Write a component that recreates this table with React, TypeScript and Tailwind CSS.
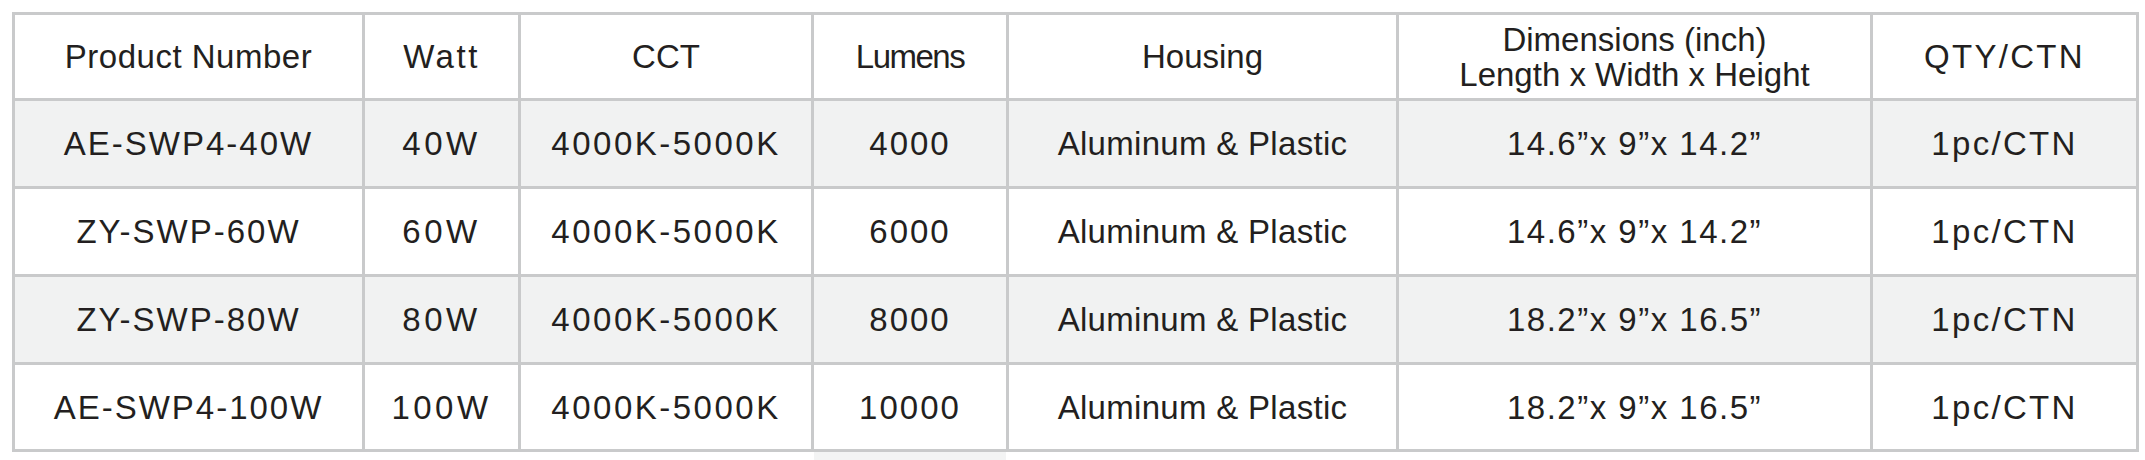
const headers = [
  "Product Number",
  "Watt",
  "CCT",
  "Lumens",
  "Housing",
  "Dimensions (inch)\nLength x Width x Height",
  "QTY/CTN",
];

// per-column tracking to get closer to the wider geometric face of the original
const headTracking = [
  "tracking-[0.5px]",
  "tracking-[2.5px]",
  "tracking-normal",
  "tracking-[-1.5px]",
  "tracking-normal",
  "tracking-normal",
  "tracking-[2.3px]",
];
const cellTracking = [
  "tracking-[2px]",
  "tracking-[3.5px]",
  "tracking-[2.5px]",
  "tracking-[2px]",
  "tracking-[0.3px]",
  "tracking-[1.5px]",
  "tracking-[2.3px]",
];

const rows = [
  ["AE-SWP4-40W", "40W", "4000K-5000K", "4000", "Aluminum & Plastic", "14.6\u201dx 9\u201dx 14.2\u201d", "1pc/CTN"],
  ["ZY-SWP-60W", "60W", "4000K-5000K", "6000", "Aluminum & Plastic", "14.6\u201dx 9\u201dx 14.2\u201d", "1pc/CTN"],
  ["ZY-SWP-80W", "80W", "4000K-5000K", "8000", "Aluminum & Plastic", "18.2\u201dx 9\u201dx 16.5\u201d", "1pc/CTN"],
  ["AE-SWP4-100W", "100W", "4000K-5000K", "10000", "Aluminum & Plastic", "18.2\u201dx 9\u201dx 16.5\u201d", "1pc/CTN"],
];

export default function App() {
  return (
    <div
      className="bg-white pt-[12px] pl-[12px] text-[#231f20] text-[33px]"
      style={{ fontFamily: '"Liberation Sans", Arial, sans-serif' }}
    >
      <div className="grid w-[2127px] grid-cols-[347px_153px_290px_192px_387px_471px_263px] gap-[3px] bg-[#c9cacb] p-[3px]">
        {headers.map((h, j) => (
          <div
            key={h}
            className={`flex h-[83px] flex-col items-center justify-center bg-white text-center leading-[35px] ${headTracking[j]}`}
          >
            {h.split("\n").map((line) => (
              <span key={line}>{line}</span>
            ))}
          </div>
        ))}
        {rows.map((row, i) =>
          row.map((cell, j) => (
            <div
              key={`${i}-${j}`}
              className={`flex items-center justify-center leading-none ${cellTracking[j]} ${
                i === rows.length - 1 ? "h-[84px]" : "h-[85px]"
              } ${i % 2 === 0 ? "bg-[#f1f2f2]" : "bg-white"}`}
            >
              {cell}
            </div>
          ))
        )}
      </div>
      <div className="ml-[802px] h-[8px] w-[192px] bg-[#f3f4f4]" />
    </div>
  );
}
